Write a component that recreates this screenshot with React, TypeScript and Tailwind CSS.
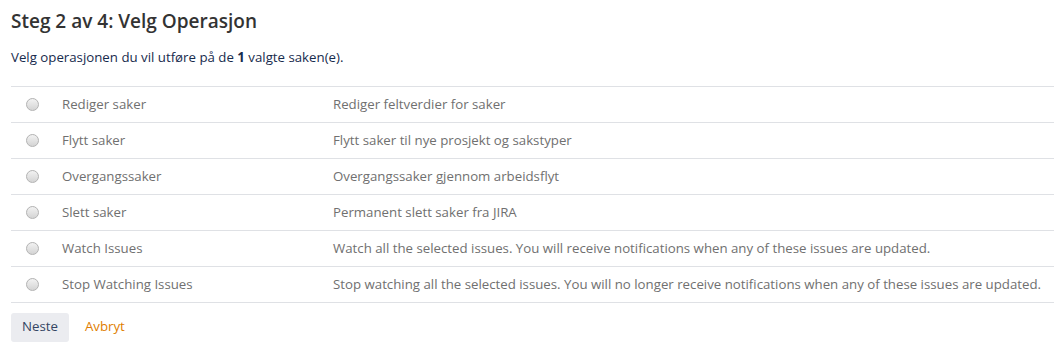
import { useState } from 'react';

const operations = [
  { id: 'edit', name: 'Rediger saker', desc: 'Rediger feltverdier for saker' },
  { id: 'move', name: 'Flytt saker', desc: 'Flytt saker til nye prosjekt og sakstyper' },
  { id: 'transition', name: 'Overgangssaker', desc: 'Overgangssaker gjennom arbeidsflyt' },
  { id: 'delete', name: 'Slett saker', desc: 'Permanent slett saker fra JIRA' },
  { id: 'watch', name: 'Watch Issues', desc: 'Watch all the selected issues. You will receive notifications when any of these issues are updated.' },
  { id: 'unwatch', name: 'Stop Watching Issues', desc: 'Stop watching all the selected issues. You will no longer receive notifications when any of these issues are updated.' },
];

export default function App() {
  const [selected, setSelected] = useState<string | null>(null);

  return (
    <div className="bg-white pl-[11px] pt-[9px] font-['Segoe_UI','Open_Sans',sans-serif] text-[#333]">
      <h2 className="text-[19px] leading-[24px] font-semibold text-[#333]">Steg 2 av 4: Velg Operasjon</h2>
      <p className="mt-[14px] text-[13.25px] leading-[20px] text-[#172b4d]">
        Velg operasjonen du vil utføre på de <strong>1</strong> valgte saken(e).
      </p>

      {/* Operations */}
      <table className="mt-[19px] w-full border-collapse">
        <tbody>
          {operations.map((op) => (
            <tr key={op.id} className="h-[36px] border-t border-[#dfe1e5]">
              <td className="w-[51px] pl-[15px] align-middle">
                <input
                  type="radio"
                  name="operation"
                  checked={selected === op.id}
                  onChange={() => setSelected(op.id)}
                  className="block h-[13px] w-[13px] appearance-none rounded-full border border-[#b4b4b4] bg-gradient-to-b from-[#f2f2f2] to-[#d4d4d4] checked:border-[4px] checked:border-[#3572b0]"
                />
              </td>
              <td className="w-[271px] text-[13.25px] text-[#707070] align-middle">{op.name}</td>
              <td className="text-[13.25px] text-[#707070] align-middle">{op.desc}</td>
            </tr>
          ))}
          <tr className="border-t border-[#dfe1e5]" />
        </tbody>
      </table>

      <div className="mt-[10px] flex items-center gap-[6px]">
        <button className="h-[29px] rounded-[3px] bg-[#ebecf0] px-[11px] text-[13.25px] text-[#344563]">Neste</button>
        <button className="h-[29px] px-[10px] text-[13.25px] text-[#e07d00]">Avbryt</button>
      </div>
    </div>
  );
}
